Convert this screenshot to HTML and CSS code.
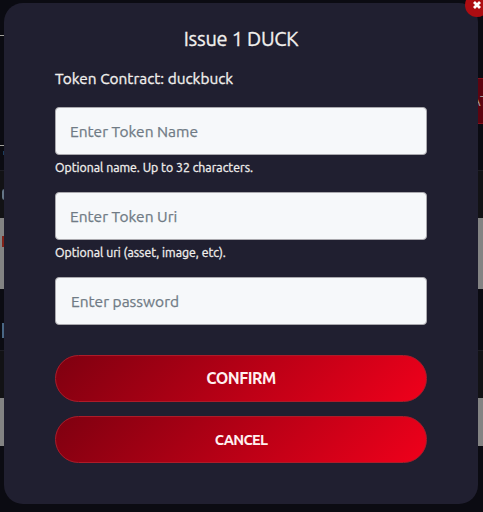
FILE: index.html
```html
<!DOCTYPE html>
<html lang="en">
<head>
<meta charset="utf-8">
<title>Issue 1 DUCK</title>
<link rel="stylesheet" href="styles.css">
</head>
<body>
<div class="page" aria-hidden="true">
  <div class="page-head"><i class="rule"></i></div>
  <div class="page-bar"><span class="page-button">AT</span></div>
  <div class="page-tabs"><i class="rule"></i><i class="dot"></i></div>
  <div class="row row-title"><i class="mark ring"></i></div>
  <div class="row row-light"><i class="mark red"></i></div>
  <div class="row row-gap"><i class="mark blue"></i></div>
  <div class="row row-title"></div>
  <div class="row row-light short"></div>
</div>
<main class="modal">
  <button class="close" aria-label="Close"><svg viewBox="0 0 10 10"><path d="M2 2L8 8M8 2L2 8"/></svg></button>
  <h1><span>Issue 1 DUCK</span></h1>
  <p class="contract">Token Contract: duckbuck</p>
  <form>
    <input class="name" type="text" placeholder="Enter Token Name">
    <small class="name-hint">Optional name. Up to 32 characters.</small>
    <input class="uri" type="text" placeholder="Enter Token Uri">
    <small class="uri-hint">Optional uri (asset, image, etc).</small>
    <input class="password" type="password" placeholder="Enter password">
    <button class="action confirm" type="button">CONFIRM</button>
    <button class="action cancel" type="button">CANCEL</button>
  </form>
</main>
</body>
</html>
```

FILE: styles.css
```css
* { box-sizing: border-box; }
body {
  margin: 0;
  width: 483px;
  height: 512px;
  overflow: hidden;
  position: relative;
  background: #0b0b12;
  font-family: Ubuntu, "Noto Sans", sans-serif;
  color: #f1efed;
}
.page { display: flex; flex-direction: column; height: 512px; }
.page-head { height: 78px; padding-top: 35px; }
.rule { display: block; width: 5px; height: 1px; background: #a2a19d; }
.page-bar { height: 46px; display: flex; justify-content: flex-end; }
.page-button {
  width: 12px;
  overflow: hidden;
  background: #5d0410;
  border-block: 1px solid #84101c;
  color: #a19b97;
  font-size: 15px;
  line-height: 44px;
}
.page-tabs { height: 46px; padding-top: 21px; }
.dot { display: block; width: 2px; height: 4px; margin: 5px 0 0 3px; background: #1c3c5c; }
.row { flex: none; display: flex; }
.row-title { height: 48px; background: #121215; border-top: 1px solid #1d1d24; }
.row-light { height: 71px; background: #838383; }
.row-gap { height: 61px; }
.short { height: 48px; }
.mark { width: 3px; margin-left: 2px; }
.ring { height: 11px; margin-top: 18px; border: 2px solid #647586; border-right: 0; border-radius: 5px 0 0 5px; }
.red { height: 11px; margin-top: 18px; background: #822219; }
.blue { height: 15px; margin-top: 34px; background: #496684; }

.modal {
  position: absolute;
  inset: 3px 5px 8px 4px;
  padding: 24px 51px 0;
  border-radius: 19px;
  background: #201f30;
}
h1 {
  margin: 0;
  height: 24px;
  text-align: center;
  font-size: 20px;
  letter-spacing: -0.25px;
  font-weight: 400;
  line-height: 24px;
  white-space: nowrap;
  -webkit-text-stroke: 0.3px;
}
.contract {
  margin: 18px 0 0;
  height: 20px;
  font-size: 15.4px;
  line-height: 20px;
  -webkit-text-stroke: 0.3px;
}
form { display: flex; flex-direction: column; margin-top: 18px; }
input {
  width: 372px;
  height: 48px;
  padding: 0 15px 0 14px;
  border: 1px solid #aaa9ae;
  border-radius: 4px;
  background: #f6f8fa;
  font: 15.5px Ubuntu, "Noto Sans", sans-serif;
}
.password { padding-left: 15px; }
input::placeholder { color: #707b85; opacity: 1; -webkit-text-stroke: 0.25px; }
small {
  height: 18px;
  margin: 4px 0 15px;
  font-size: 12.3px;
  line-height: 18px;
  -webkit-text-stroke: 0.3px;
}
.action {
  width: 372px;
  height: 47px;
  padding: 0;
  border: 1px solid #ad1c29;
  border-radius: 24px;
  background: linear-gradient(135deg, #7e0010, #f0001b) border-box;
  color: #fff0f0;
  font: 700 16px/45px Ubuntu, "Noto Sans", sans-serif;
}
.confirm { margin-top: 30px; letter-spacing: -0.5px; }
.cancel { margin-top: 14px; font-size: 14.6px; letter-spacing: -0.75px; }
.close {
  position: absolute;
  left: 461px;
  top: -10px;
  width: 24px;
  height: 24px;
  padding: 0;
  border: 0;
  border-radius: 50%;
  background: #ad0d12;
}
.close svg { position: absolute; left: 7px; top: 7px; width: 10px; height: 10px; stroke: #fff; stroke-width: 2.8; }
```
